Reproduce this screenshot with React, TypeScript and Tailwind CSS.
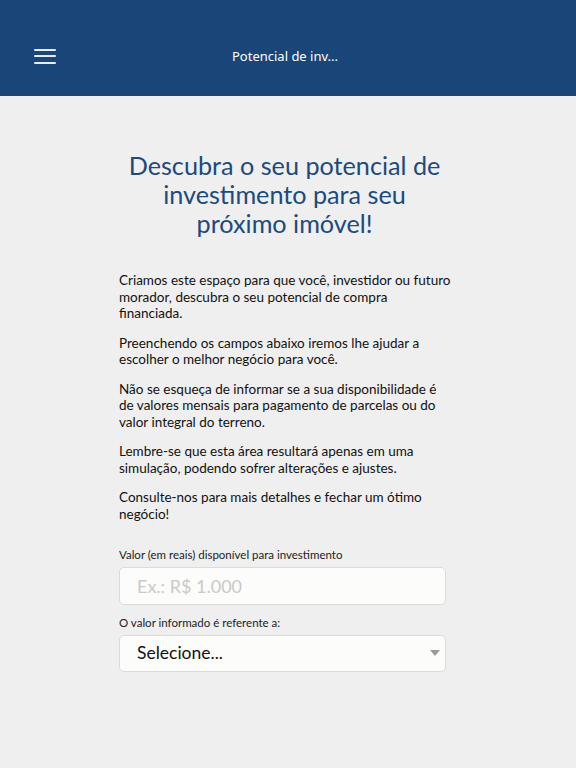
import React, { useState } from 'react';

// lines kept as in the layout so wrapping matches the design
const paragraphs: string[][] = [
  ['Criamos este espaço para que você, investidor ou futuro', 'morador, descubra o seu potencial de compra', 'financiada.'],
  ['Preenchendo os campos abaixo iremos lhe ajudar a', 'escolher o melhor negócio para você.'],
  ['Não se esqueça de informar se a sua disponibilidade é', 'de valores mensais para pagamento de parcelas ou do', 'valor integral do terreno.'],
  ['Lembre-se que esta área resultará apenas em uma', 'simulação, podendo sofrer alterações e ajustes.'],
  ['Consulte-nos para mais detalhes e fechar um ótimo', 'negócio!'],
];

const App: React.FC = () => {
  const [valor, setValor] = useState('');
  const [tipo, setTipo] = useState('');

  return (
    <div className="min-h-[768px] bg-[#efefef] font-['Lato','Liberation_Sans',sans-serif]">
      <header className="h-[96px] bg-[#1a4578] flex items-center relative">
        <button className="ml-[34px] mt-[16px] flex flex-col gap-[4.5px] w-[22px]">
          <span className="block h-[2px] w-[22px] bg-white/90 rounded" />
          <span className="block h-[2px] w-[22px] bg-white/90 rounded" />
          <span className="block h-[2px] w-[22px] bg-white/90 rounded" />
        </button>
        <h1 className="absolute left-0 right-0 top-[47px] pr-[6px] text-center text-white text-[13px] font-['Noto_Sans',sans-serif]">
          Potencial de inv...
        </h1>
      </header>

      <main className="pl-[119px] pr-[130px] pt-[55px] pb-10">
        <h2 className="text-center text-[25.2px] leading-[29px] text-[#1c4a7e] mr-[-4px]">
          Descubra o seu potencial de investimento para seu próximo imóvel!
        </h2>

        <div className="mt-[34px] flex flex-col gap-[13px] text-[13.5px] leading-[16.5px] text-[#111] mr-[-20px]">
          {paragraphs.map((lines) => (
            <p key={lines[0]}>
              {lines.map((l) => (
                <span key={l} className="block whitespace-nowrap">
                  {l}
                </span>
              ))}
            </p>
          ))}
        </div>

        <form className="mt-[25px]">
          <label htmlFor="valor" className="block text-[11.5px] leading-[15px] text-[#222]">
            Valor (em reais) disponível para investimento
          </label>
          <input
            id="valor"
            value={valor}
            onChange={(e) => setValor(e.target.value)}
            placeholder="Ex.: R$ 1.000"
            className="mt-[5px] w-full h-[38px] rounded-[5px] border border-[#dddbd6] bg-[#fcfcfa] px-[17px] text-[18px] placeholder:text-[#c9c9c9] outline-none"
          />

          <label htmlFor="tipo" className="block mt-[10px] text-[11.5px] leading-[15px] text-[#222]">
            O valor informado é referente a:
          </label>
          <div className="relative mt-[5px]">
            <select
              id="tipo"
              value={tipo}
              onChange={(e) => setTipo(e.target.value)}
              className="appearance-none w-full h-[37px] rounded-[5px] border border-[#dddbd6] bg-[#fcfcfa] px-[17px] text-[17.5px] text-[#111] outline-none"
            >
              <option value="">Selecione...</option>
              <option value="mensal">Valor mensal</option>
              <option value="integral">Valor integral</option>
            </select>
            <svg
              className="pointer-events-none absolute right-[6px] top-[15px]"
              width="10"
              height="6"
              viewBox="0 0 10 6"
            >
              <path d="M0 0h10L5 6z" fill="#9a9a9a" />
            </svg>
          </div>
        </form>
      </main>
    </div>
  );
};

export default App;
